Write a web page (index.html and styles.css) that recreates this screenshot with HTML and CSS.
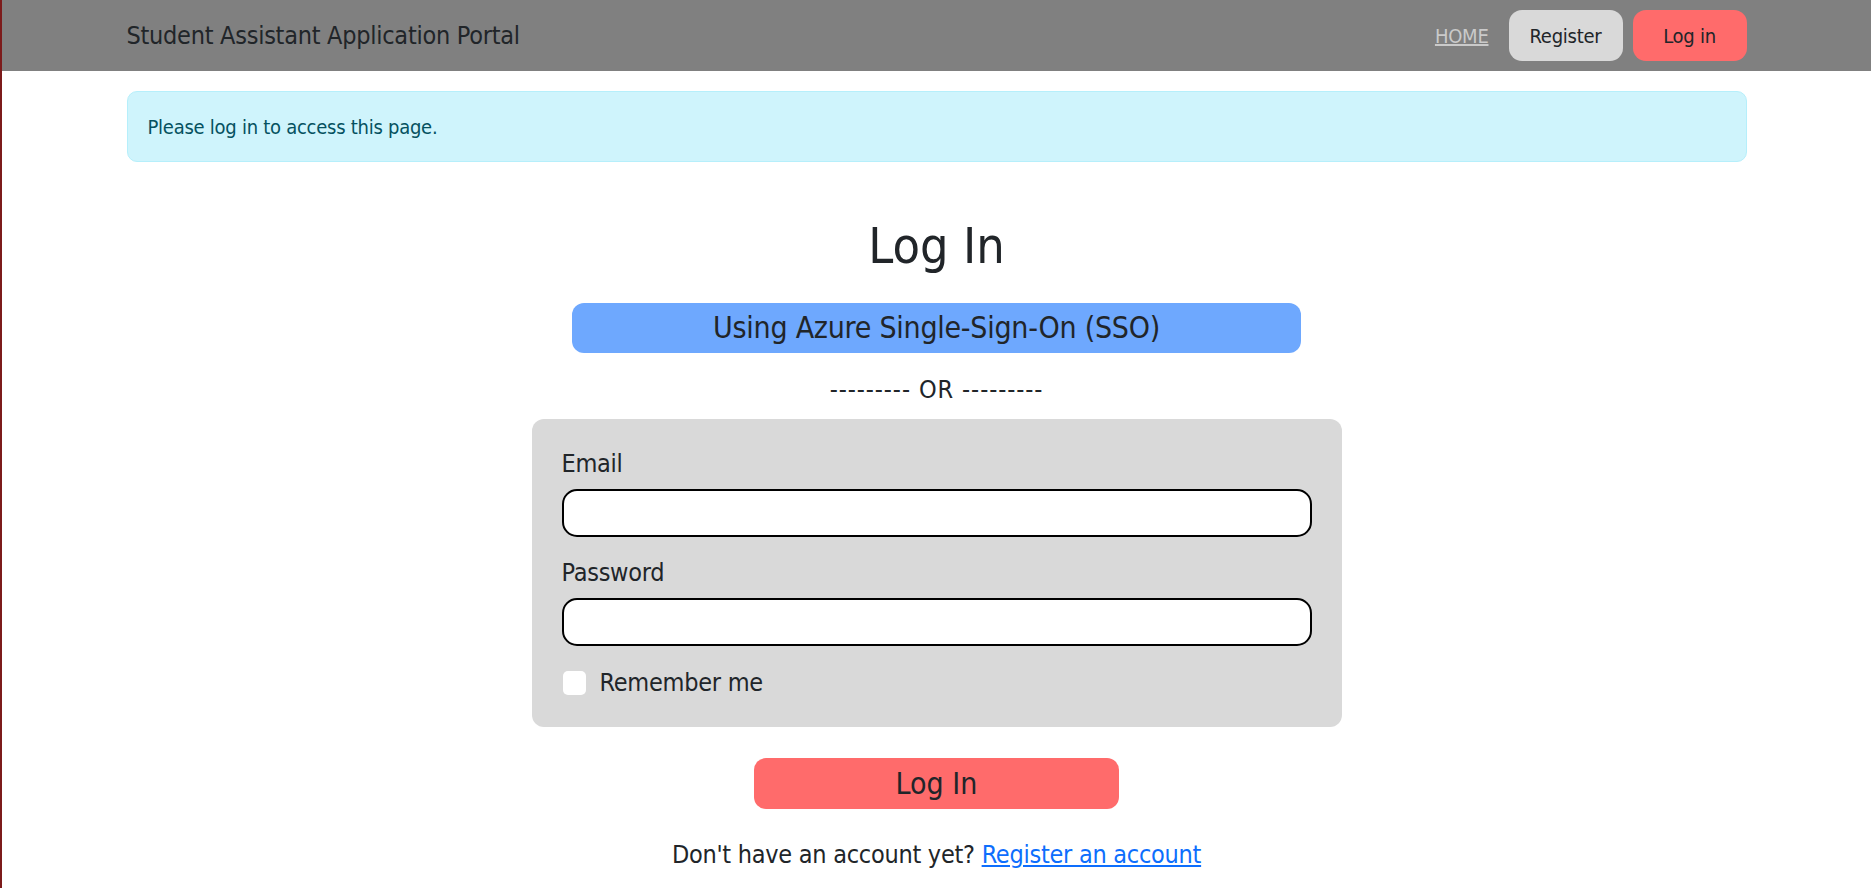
FILE: index.html
```html
<!DOCTYPE html>
<html lang="en">
<head>
<meta charset="utf-8">
<title>Log In - Student Assistant Application Portal</title>
<link rel="stylesheet" href="styles.css">
</head>
<body>
<nav class="navbar">
  <div class="container nav-inner">
    <a class="brand" href="#">Student Assistant Application Portal</a>
    <div class="nav-links">
      <a class="nav-home" href="#">HOME</a>
      <a class="nav-btn nav-register" href="#">Register</a>
      <a class="nav-btn nav-login" href="#">Log in</a>
    </div>
  </div>
</nav>
<main class="container">
  <div class="alert">Please log in to access this page.</div>
  <section class="login">
    <h1 class="login-title">Log In</h1>
    <a class="btn-sso" href="#">Using Azure Single-Sign-On (SSO)</a>
    <p class="or">--------- OR ---------</p>
    <form class="login-card">
      <label class="field-label" for="email">Email</label>
      <input class="field-input" id="email" type="email">
      <label class="field-label" for="password">Password</label>
      <input class="field-input field-last" id="password" type="password">
      <label class="remember"><span class="check"></span><span>Remember me</span></label>
    </form>
    <button class="btn-submit" type="button">Log In</button>
    <p class="signup">Don't have an account yet? <a class="signup-link" href="#">Register an account</a></p>
  </section>
</main>
</body>
</html>
```
FILE: styles.css
```css
html, body {
  margin: 0;
  padding: 0;
}
body {
  border-left: 2px solid #7c1b1b;
  min-height: 888px;
  box-sizing: border-box;
  background: #ffffff;
  color: #212529;
  font-family: "DejaVu Sans Condensed", "DejaVu Sans", sans-serif;
  font-stretch: condensed;
  font-size: 20px;
  line-height: 30px;
  letter-spacing: -0.013em;
}
.container {
  width: 1620px;
  margin: 0 auto;
}
.navbar {
  background: #808080;
  padding: 10px 0;
}
.nav-inner {
  display: flex;
  align-items: center;
  justify-content: space-between;
}
.brand {
  color: #212529;
  text-decoration: none;
  font-size: 25px;
  line-height: 37px;
}
.nav-links {
  display: flex;
  align-items: center;
}
.nav-home {
  color: #cacaca;
  text-decoration: underline;
  font-size: 20px;
  margin-right: 20px;
}
.nav-btn {
  width: 114px;
  height: 51px;
  display: flex;
  align-items: center;
  justify-content: center;
  border-radius: 13px;
  color: #212529;
  text-decoration: none;
  font-size: 20px;
}
.nav-register {
  background: #d9d9d9;
  margin-right: 10px;
}
.nav-login {
  background: #ff6b6b;
}
.alert {
  margin-top: 20px;
  padding: 19.5px 20px;
  background: #cff4fc;
  border: 1px solid #b6effb;
  border-radius: 10px;
  color: #055160;
}
.login {
  display: flex;
  flex-direction: column;
  align-items: center;
}
.login-title {
  margin: 54px 0 0;
  font-size: 50px;
  line-height: 60px;
  font-weight: 400;
  letter-spacing: 0;
}
.btn-sso {
  margin-top: 27px;
  width: 729px;
  height: 50px;
  display: flex;
  align-items: center;
  justify-content: center;
  background: #6ea8fe;
  border-radius: 12px;
  color: #212529;
  text-decoration: none;
  font-size: 30px;
}
.or {
  margin: 22px 0 0;
  font-size: 25px;
  line-height: 30px;
  letter-spacing: 0.9px;
}
.login-card {
  margin-top: 14px;
  width: 810px;
  box-sizing: border-box;
  padding: 30px 30px 29px;
  background: #d9d9d9;
  border-radius: 12px;
  display: flex;
  flex-direction: column;
  font-size: 25px;
  line-height: 30px;
}
.field-label {
  margin-bottom: 10px;
}
.field-input {
  height: 48px;
  box-sizing: border-box;
  border: 2px solid #000;
  border-radius: 15px;
  background: #fff;
  margin: 0 0 21px;
  padding: 0 14px;
  font: inherit;
}
.field-last {
  margin-bottom: 22px;
}
.remember {
  display: flex;
  align-items: center;
}
.check {
  width: 23px;
  height: 24px;
  background: #fff;
  border-radius: 5px;
  margin-left: 1px;
  margin-right: 14px;
}
.btn-submit {
  margin-top: 31px;
  width: 365px;
  height: 51px;
  border: 0;
  border-radius: 12px;
  background: #ff6b6b;
  color: #212529;
  font: inherit;
  font-size: 30px;
  line-height: 30px;
  padding: 0;
}
.signup {
  margin: 31px 0 0;
  font-size: 25px;
  line-height: 30px;
}
.signup-link {
  color: #0d6efd;
  text-decoration: underline;
}
```
